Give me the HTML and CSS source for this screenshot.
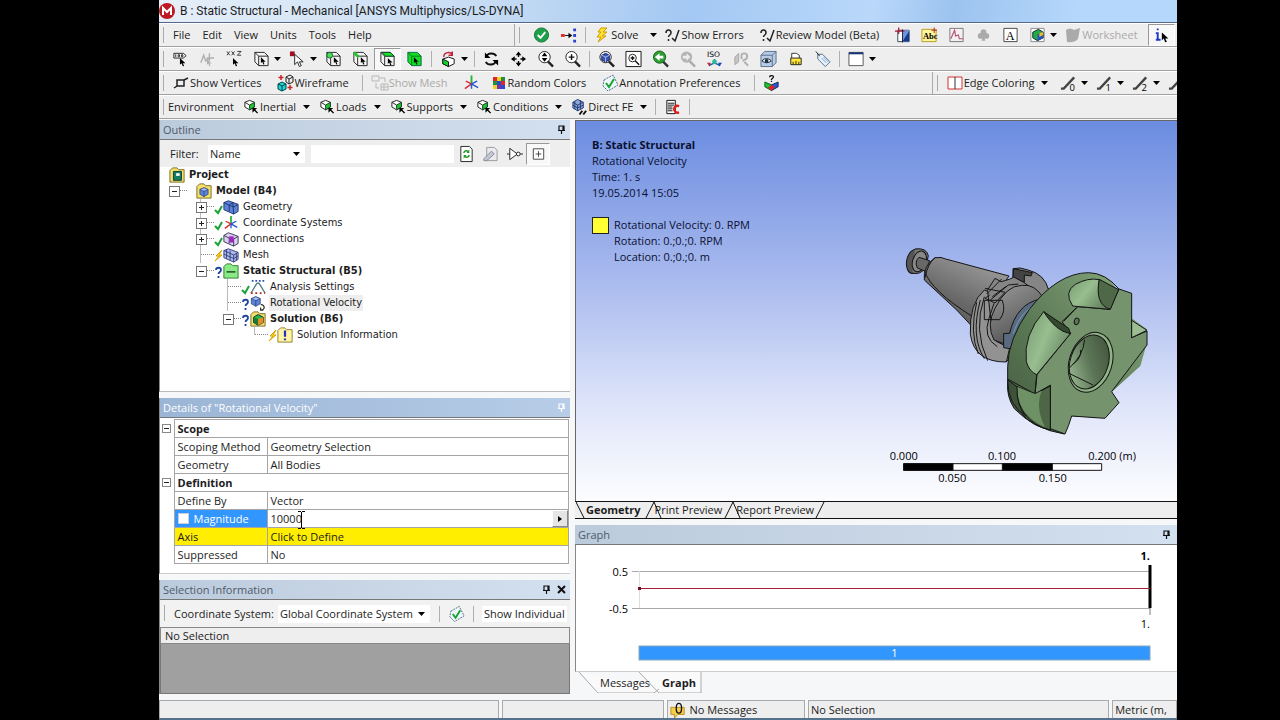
FILE: index.html
```html
<!DOCTYPE html>
<html lang="en">
<head>
<meta charset="utf-8">
<title>B : Static Structural - Mechanical</title>
<link rel="stylesheet" href="styles.css">
</head>
<body>
<svg class="defs" aria-hidden="true">
  <symbol id="arrow" viewBox="0 0 7 4"><path d="M0 0h7L3.500 4z" fill="#000"/></symbol>
  <symbol id="ptr" viewBox="0 0 7 10"><path d="M0 0v8l2-2 1.500 4 1.500-.700-1.500-3.300h3z"/></symbol>
  <symbol id="box" viewBox="0 0 18 18"><path d="M2 2h10l4 4v10H6L2 12z" fill="#f4f4f4" stroke="#222"/><path d="M2 2l4 4h10M6 6v10" fill="none" stroke="#222"/></symbol>
  <symbol id="selbox" viewBox="0 0 18 18"><use href="#box"/><use href="#ptr" x="8" y="7" width="6" height="8"/></symbol>
  <symbol id="vertexbox" viewBox="0 0 18 18"><use href="#box"/><circle cx="5" cy="5" r="3" fill="#4be04b" stroke="#164"/><use href="#ptr" x="9" y="7" width="6" height="8"/></symbol>
  <symbol id="edgebox" viewBox="0 0 18 18"><use href="#box"/><path d="M2 2l5 5" stroke="#26c42b" stroke-width="3"/><use href="#ptr" x="9" y="7" width="6" height="8"/></symbol>
  <symbol id="facebox" viewBox="0 0 18 18"><use href="#box"/><path d="M3 2h9l4 4H7z" fill="#18e22b" stroke="#142"/><use href="#ptr" x="9" y="8" width="6" height="8"/></symbol>
  <symbol id="bodybox" viewBox="0 0 18 18"><path d="M2 2h10l4 4v10H6L2 12z" fill="#12df25" stroke="#064"/><path d="M2 2l4 4h10M6 6v10" fill="none" stroke="#087818"/><use href="#ptr" x="8" y="7" width="6" height="8"/></symbol>
  <symbol id="label" viewBox="0 0 18 18"><path d="M2 3h10l3 2.500L12 8H2zM4 4v3M6.500 4.500h1.500v2H6.500zM10 4.500h1.500v2H10z" fill="#fff" stroke="#222"/><use href="#ptr" x="8" y="8" width="7" height="9"/></symbol>
  <symbol id="direction" viewBox="0 0 18 18"><path d="M2 13l3-8 2 6 4-3M11 3v8M8 8h8" stroke="#b0b0b0" fill="none" stroke-width="1.500"/><use href="#ptr" x="8" y="9" width="6" height="8" fill="#b0b0b0"/></symbol>
  <symbol id="coords" viewBox="0 0 18 18"><path d="M1 1l3 4M4 1L1 5M6 1l3 4M9 1L6 5M12 1h4l-4 4h4" stroke="#333" fill="none"/><use href="#ptr" x="7" y="8" width="7" height="9"/></symbol>
  <symbol id="singlesel" viewBox="0 0 18 18"><path d="M1 1h5v5H1z" fill="#a00e20"/><path d="M6 4v11l3-3 2 5 2-1-2-4h4z" fill="#fff" stroke="#222"/></symbol>
  <symbol id="rotbox" viewBox="0 0 18 18"><path d="M3 9l6-2 6 2v5l-6 3-6-3z" fill="#fff" stroke="#111"/><path d="M3 9l6 3v5l-6-3z" fill="#13d528" stroke="#111"/><path d="M4 7c0-6 8-6 9-2M13 1v4h-4" fill="none" stroke="#c0213b" stroke-width="1.500"/></symbol>
  <symbol id="rotate" viewBox="0 0 18 18"><path d="M3 7c2-5 9-5 11-1M14 11c-2 5-9 5-11 1" fill="none" stroke="#111" stroke-width="2"/><path d="M2 2v6h6zM16 16v-6h-6z"/></symbol>
  <symbol id="pan" viewBox="0 0 18 18"><path d="M9 3v12M3 9h12" stroke="#111" stroke-width="1.500" stroke-dasharray="4 4"/><path d="M9 1l3 4H6zM9 17l3-4H6zM1 9l4-3v6zM17 9l-4-3v6z"/></symbol>
  <symbol id="lens" viewBox="0 0 18 18"><path d="M11 11l6 6" stroke="#222" stroke-width="2.500"/><circle cx="8" cy="7" r="6" fill="#fff" stroke="#222"/></symbol>
  <symbol id="zoomud" viewBox="0 0 18 18"><use href="#lens"/><path d="M8 2l3 4H5zM8 12l3-4H5z"/></symbol>
  <symbol id="zoomin" viewBox="0 0 18 18"><use href="#lens"/><path d="M8 4v6M5 7h6" stroke="#111" stroke-width="1.500"/></symbol>
  <symbol id="zoomfit" viewBox="0 0 18 18"><use href="#lens"/><path d="M4 5l4-2 4 2v5l-4 2-4-2z" fill="#3854b5" stroke="#112267"/><path d="M4 5l4 2 4-2M8 7v5" stroke="#b4c2f0" fill="none"/></symbol>
  <symbol id="zoombox" viewBox="0 0 18 18"><path d="M1 1h16v16H1z" fill="#fff" stroke="#111"/><circle cx="8" cy="8" r="4" fill="none" stroke="#222"/><path d="M11 11l4 4M8 6v4M6 8h4" stroke="#111" stroke-width="1.500"/></symbol>
  <symbol id="zoomprev" viewBox="0 0 18 18"><path d="M11 11l6 6" stroke="#333" stroke-width="2.500"/><circle cx="8" cy="7" r="6.500" fill="#2e9b33" stroke="#17651c"/><path d="M3 7l5-4v2.500h4v3H8V11z" fill="#fff"/></symbol>
  <symbol id="zoomnext" viewBox="0 0 18 18"><path d="M11 11l6 6" stroke="#aaa" stroke-width="2.500"/><circle cx="8" cy="7" r="6" fill="#b4b4b4"/><path d="M12 7L8 3v2.500H4v3h4V11z" fill="#eee"/></symbol>
  <symbol id="lookat" viewBox="0 0 18 18"><path d="M2 7l4-4v9l-4 3z" fill="#c5c5c5" stroke="#a8a8a8"/><path d="M9 9V5q0-2 3-2t3 3-3 4l-2 1" fill="none" stroke="#b0b0b0" stroke-width="2"/><path d="M12 12l4 4" stroke="#aaa" stroke-width="2"/></symbol>
  <symbol id="eyebox" viewBox="0 0 18 18"><path d="M1 5l4-4h12v12l-4 4H1z" fill="#b7cbe4" stroke="#57708f"/><path d="M1 5h12v12M13 5l4-4" fill="none" stroke="#57708f"/><path d="M2 11q5-5 10 0-5 4-10 0z" fill="#fff" stroke="#223"/><circle cx="7" cy="11" r="2" fill="#134"/></symbol>
  <symbol id="ruler" viewBox="0 0 18 18"><path d="M5 8V3h5l3 2v3" fill="#fff" stroke="#333"/><path d="M4 8h11v7H4z" fill="#ffe838" stroke="#222"/><path d="M6.500 12v3M9.500 11v4M12.500 12v3" stroke="#222"/></symbol>
  <symbol id="tag" viewBox="0 0 18 18"><path d="M4 4h5l8 8-5 5-8-8z" fill="#e7f1fb" stroke="#546b86"/><path d="M8 8l5 5M10 7l5 5" stroke="#78a5d5"/><path d="M6 6L2 1" stroke="#222"/></symbol>
  <symbol id="window" viewBox="0 0 18 18"><path d="M1 2h15v14H1z" fill="#fff" stroke="#555"/><path d="M1 2h15v2H1z" fill="#143078"/></symbol>
  <symbol id="vertices" viewBox="0 0 18 18"><path d="M5 6h7v6H5z" fill="none" stroke="#222" stroke-width="1.500"/><path d="M12 6l4-2M5 12l-3 2" stroke="#222" stroke-width="1.500"/></symbol>
  <symbol id="wire" viewBox="0 0 18 18"><path d="M10 3l4-2 3 2v5l-4 2-3-2z" fill="#eee" stroke="#222"/><path d="M10 3l3 2 4-2M13 5v5" fill="none" stroke="#222"/><path d="M2 10l4-2 4 2v5l-4 2-4-2z" fill="#21d5d5" stroke="#044"/><path d="M2 10l4 2 4-2M6 12v5" fill="none" stroke="#044"/><path d="M5 1v5M2.500 3.500h5M14 11v5M11.500 13.500h5" stroke="#c32626" stroke-width="1.500"/></symbol>
  <symbol id="mesh" viewBox="0 0 18 18"><path d="M1 2h7v5H1zM10 10h7v6h-7zM13 10v6M10 13h7M9 4h5v4M5 9v5h3" fill="none" stroke="#b7b7b7"/></symbol>
  <symbol id="triad" viewBox="0 0 18 18"><path d="M9 10V1" stroke="#28b535" stroke-width="2"/><path d="M9 10l-7 5M9 10l-6-3" stroke="#d32c38" stroke-width="1.500"/><path d="M9 10l7 4M9 10l6-3M9 10v5" stroke="#2456c9" stroke-width="1.500"/></symbol>
  <symbol id="colors" viewBox="0 0 18 18"><path d="M3 3h4v4H3zM11 7h4v4h-4z" fill="#df2626"/><path d="M7 3h4v4H7zM3 11h4v4H3z" fill="#f1cf25"/><path d="M11 3h4v4h-4zM3 7h4v4H3z" fill="#1e8f3b"/><path d="M7 7h4v4H7zM11 11h4v4h-4z" fill="#2b49ce"/><path d="M7 11h4v4H7z" fill="#7a30b4"/></symbol>
  <symbol id="annot" viewBox="0 0 18 18"><path d="M3 6L12 1l5 10-10 6-5-5z" fill="#eef7fb" stroke="#486f83" stroke-dasharray="2 1"/><path d="M5 9l3 4 5-8" fill="none" stroke="#18a42d" stroke-width="2"/></symbol>
  <symbol id="rgbbox" viewBox="0 0 18 18"><path d="M2 8l7 3v6l-7-4z" fill="#18c52c" stroke="#152"/><path d="M16 8l-7 3v6l7-4z" fill="#2656da" stroke="#125"/><path d="M5 14l4-3 4 2-4 4z" fill="#da2525"/><path d="M7 3c0-3 5-2 4 0L9 5v1M9 7v1" fill="none" stroke="#111" stroke-width="1.300"/></symbol>
  <symbol id="load" viewBox="0 0 18 18"><path d="M2 4l5-2 5 2v5l-5 3-5-3z" fill="#fff" stroke="#222"/><path d="M7 7l5-3v5l-5 3z" fill="#20c531" stroke="#142"/><path d="M2 4l5 3" stroke="#222"/><path d="M10 10h5l-2 2 3 3-1 1-3-3-2 2z"/></symbol>
  <symbol id="cube" viewBox="0 0 18 18"><path d="M2 5l7-3 7 3v8l-7 4-7-4z" fill="#5d84d6" stroke="#1c3276"/><path d="M2 5l7 3 7-3-7-3z" fill="#a8c3f4" stroke="#1c3276"/><path d="M9 8v9" stroke="#1c3276"/></symbol>
  <symbol id="directfe" viewBox="0 0 18 18"><path d="M2 4l5-3 6 3v6l-6 3-5-3z" fill="#8fa6d8" stroke="#223a70"/><path d="M2 4l5 3 6-3M7 7v6M4 3v8M10 2v9M2 7l5 3 6-3" stroke="#223a70" fill="none"/><path d="M9 17l3-4M13 17l3-4" stroke="#111" stroke-width="2"/></symbol>
  <symbol id="doc" viewBox="0 0 18 18"><path d="M3 2h9v14H3z" fill="#fff" stroke="#111"/><path d="M4 5h7M4 7h7M4 9h5M4 11h5M4 13h5" stroke="#111"/><path d="M16 8c-7-2-7 8 0 7" fill="none" stroke="#e01c1c" stroke-width="2.500"/></symbol>
  <symbol id="ok" viewBox="0 0 18 18"><circle cx="9" cy="9" r="7.500" fill="#1fa04a" stroke="#187638"/><path d="M5 9l3 3 5-6" fill="none" stroke="#fff" stroke-width="2"/></symbol>
  <symbol id="connect" viewBox="0 0 18 18"><path d="M1 8h4v3H1z" fill="#e22727"/><path d="M5 9.500h6" stroke="#111"/><path d="M9 6.500l4 3-4 3z"/><path d="M14 2h3v3h-3zM14 8h3v3h-3zM14 14h3v3h-3z" fill="#2c43cf"/></symbol>
  <symbol id="bolt" viewBox="0 0 18 18"><path d="M8 2h6l-4 4h4l-5 4h4l-8 6 3-5H4l4-5H5z" fill="#ffe72c" stroke="#d09a00"/></symbol>
  <symbol id="query" viewBox="0 0 18 18"><path d="M3 7c0-4 5-4 5 0 0 2-2.500 2-2.500 4M5.500 13v2M9 12l3 3 4-11" fill="none" stroke="#222" stroke-width="1.500"/></symbol>
  <symbol id="section" viewBox="0 0 18 18"><path d="M4 4h12v12H4z" fill="#fff" stroke="#345"/><path d="M9 4h7v12H9z" fill="#6f93dd"/><path d="M9 16l7-11v11z" fill="#173a91"/><path d="M1 5h10M5 1v7" stroke="#a51836" stroke-width="1.300"/><path d="M9 3v14" stroke="#223"/></symbol>
  <symbol id="chart" viewBox="0 0 18 18"><path d="M2 2h14v14H2z" fill="#f5eff3" stroke="#777"/><path d="M3 13l4-9 1 6 3-1 1 4 4 0" fill="none" stroke="#b5536e" stroke-width="1.200"/></symbol>
  <symbol id="club" viewBox="0 0 18 18"><circle cx="9" cy="6" r="3" fill="#aaa"/><circle cx="6" cy="10" r="3" fill="#aaa"/><circle cx="12" cy="10" r="3" fill="#aaa"/><path d="M9 8l2 7H7z" fill="#aaa"/></symbol>
  <symbol id="image" viewBox="0 0 18 18"><path d="M2 2h14v14H2z" fill="#fff" stroke="#888"/><path d="M4 6l6-3 5 3v6l-6 3-5-3z" fill="#22ad40" stroke="#123"/><path d="M9 8l6-2v6l-6 3z" fill="#264fc4"/><path d="M11 7l4-1v3l-4 2z" fill="#eebe22"/></symbol>
  <symbol id="sheet" viewBox="0 0 18 18"><path d="M2 4q4-3 8 0l6-2-2 11q-4 4-11 3z" fill="#aaa"/></symbol>
  <symbol id="edgecol" viewBox="0 0 18 18"><path d="M2 3h14v12H2z" fill="#fff" stroke="#d43333"/><path d="M9 3v12" stroke="#333"/></symbol>
  <symbol id="pin" viewBox="0 0 9 9"><path d="M2 5V1h5v4M1 5.500h7M4.500 6v3M6 1v4" fill="none" stroke="currentColor" stroke-width="1.200"/></symbol>
  <symbol id="tick" viewBox="0 0 9 16"><path d="M1 11l3 3 4-7" fill="none" stroke="#1ba336" stroke-width="2"/></symbol>
  <symbol id="ask" viewBox="0 0 9 16"><path d="M2 7c0-3 5-3 5 0 0 2-2.500 2-2.500 4M4.500 13v2" fill="none" stroke="#1d46a1" stroke-width="1.800"/></symbol>
  <symbol id="zap" viewBox="0 0 9 16"><path d="M8 3L2 9h3l-4 5 7-6H5z" fill="#ffe12f" stroke="#d6a300"/></symbol>
  <symbol id="folder" viewBox="0 0 18 18"><path d="M1 4l3-3h5l2 2h6v14H1z" fill="#f3df6c" stroke="#77651c"/></symbol>
  <symbol id="project" viewBox="0 0 18 18"><use href="#folder"/><path d="M5 5h9v10H5z" fill="#147b64" stroke="#053c30"/><path d="M8 7h4v3H8z" fill="#fff"/></symbol>
  <symbol id="model" viewBox="0 0 18 18"><use href="#folder"/><use href="#cube" x="3" y="4" width="12" height="12"/></symbol>
  <symbol id="geom" viewBox="0 0 18 18"><path d="M1 4l5-2 11 4v8l-5 3L1 12z" fill="#5e82d5" stroke="#19316f"/><path d="M1 4l6 3v7M7 7l4-3 1 13M7 7l5 2 5-3" fill="none" stroke="#19316f"/></symbol>
  <symbol id="conn" viewBox="0 0 18 18"><path d="M1 5l5-3 11 4v8l-5 3-11-5z" fill="#d9d2ea" stroke="#342b53"/><path d="M1 5l6 3v6M12 9v8M7 8l5 1 5-3" fill="none" stroke="#342b53"/><path d="M7 6h5v7H7z" fill="#9d28c2"/></symbol>
  <symbol id="meshcube" viewBox="0 0 18 18"><path d="M1 4l5-2 11 4v8l-5 3L1 12z" fill="#aebbe8" stroke="#2f397e"/><path d="M1 8l11 5 5-3M4 3v10M8 4v11M12 9v8M1 4l11 5 5-3M15 7v8" fill="none" stroke="#2f397e"/></symbol>
  <symbol id="static" viewBox="0 0 18 18"><path d="M1 4l3-3h5l2 2h6v14H1z" fill="#8be987" stroke="#267927"/><path d="M4 10h10" stroke="#123f14" stroke-width="1.500"/></symbol>
  <symbol id="settings" viewBox="0 0 18 18"><path d="M2 2h15" stroke="#2c4fb4" stroke-width="2" stroke-dasharray="2 2"/><path d="M1 16L7 6q2-3 4 0l6 10" fill="none" stroke="#4a7c84" stroke-width="1.500"/><path d="M1 16h16" stroke="#ae2424" stroke-width="2" stroke-dasharray="2 3"/></symbol>
  <symbol id="rotvel" viewBox="0 0 18 18"><use href="#cube" x="0" y="0" width="13" height="14"/><path d="M12 11c4-1 6 5 1 6M12 14v3h3" fill="none" stroke="#222" stroke-width="1.300"/></symbol>
  <symbol id="solution" viewBox="0 0 18 18"><use href="#folder"/><path d="M4 7l5-3 6 3v6l-6 3-5-3z" fill="#22b948" stroke="#123"/><path d="M9 9l6-2v6l-6 3z" fill="#e98d22"/><path d="M9 9l-5-2v6l5 3z" fill="#187a35"/></symbol>
  <symbol id="info" viewBox="0 0 18 18"><path d="M1 4l3-3h5l2 2h6v14H1z" fill="#fff5a3" stroke="#8a7621"/><path d="M9 4v7M9 13v2" stroke="#2432bd" stroke-width="2.500"/></symbol>
</svg>

<main class="window">
  <header class="titlebar">
    <svg class="logo" viewBox="0 0 16 16"><circle cx="8" cy="8" r="8" fill="#bd1823"/><path d="M4 12V5l4 4 4-4v7" fill="none" stroke="#fff" stroke-width="2"/></svg>
    <h1>B : Static Structural - Mechanical [ANSYS Multiphysics/LS-DYNA]</h1>
  </header>

  <div class="bar">
    <nav class="toolbar menu">
      <button>File</button><button>Edit</button><button>View</button><button>Units</button><button>Tools</button><button>Help</button>
    </nav>
    <div class="toolbar standard">
      <button class="tool" aria-label="Status"><svg><use href="#ok"/></svg></button>
      <button class="tool" aria-label="Connections"><svg><use href="#connect"/></svg></button>
      <i class="sep"></i>
      <button class="text solve"><svg><use href="#bolt"/></svg>Solve<svg class="caret wide"><use href="#arrow"/></svg></button>
      <button class="text"><svg><use href="#query"/></svg>Show Errors</button>
      <button class="text"><svg><use href="#query"/></svg>Review Model (Beta)</button>
      <button class="tool" aria-label="Section plane"><svg><use href="#section"/></svg></button>
      <button class="tool" aria-label="Annotation"><svg viewBox="0 0 18 18"><path d="M1 3h15v13H1z" fill="#fff59a" stroke="#bb9a20"/><text x="2" y="13" class="abc">Abc</text><path d="M14 1v6M11 4h6" stroke="#a33"/></svg></button>
      <button class="tool" aria-label="Chart"><svg><use href="#chart"/></svg></button>
      <button class="tool" aria-label="Comment" disabled><svg><use href="#club"/></svg></button>
      <button class="tool" aria-label="Text"><svg viewBox="0 0 18 18"><path d="M2 2h14v14H2z" fill="#fff" stroke="#444"/><text x="4" y="14" class="serif">A</text></svg></button>
      <button class="tool drop" aria-label="Image"><svg><use href="#image"/></svg><svg class="caret"><use href="#arrow"/></svg></button>
      <button class="text" disabled><svg><use href="#sheet"/></svg>Worksheet</button>
      <button class="tool pressed" aria-label="Selection information"><svg viewBox="0 0 18 18"><path d="M5 2v2M3 7h2v7M3 14h5" stroke="#1936ce" stroke-width="2" fill="none"/><use href="#ptr" x="9" y="6" width="8" height="11"/></svg></button>
    </div>
  </div>

  <div class="bar">
    <div class="toolbar">
      <button class="tool" aria-label="Label"><svg><use href="#label"/></svg></button>
      <button class="tool" aria-label="Direction" disabled><svg><use href="#direction"/></svg></button>
      <button class="tool" aria-label="Coordinates"><svg><use href="#coords"/></svg></button>
      <button class="tool drop" aria-label="Select type"><svg><use href="#selbox"/></svg><svg class="caret"><use href="#arrow"/></svg></button>
      <button class="tool drop" aria-label="Select mode"><svg><use href="#singlesel"/></svg><svg class="caret"><use href="#arrow"/></svg></button>
      <button class="tool" aria-label="Vertex"><svg><use href="#vertexbox"/></svg></button>
      <button class="tool" aria-label="Edge"><svg><use href="#edgebox"/></svg></button>
      <button class="tool pressed" aria-label="Face"><svg><use href="#facebox"/></svg></button>
      <button class="tool" aria-label="Body"><svg><use href="#bodybox"/></svg></button>
      <i class="sep"></i>
      <button class="tool drop" aria-label="Extend"><svg><use href="#rotbox"/></svg><svg class="caret"><use href="#arrow"/></svg></button>
      <i class="sep"></i>
      <button class="tool" aria-label="Rotate"><svg><use href="#rotate"/></svg></button>
      <button class="tool" aria-label="Pan"><svg><use href="#pan"/></svg></button>
      <button class="tool" aria-label="Zoom"><svg><use href="#zoomud"/></svg></button>
      <button class="tool" aria-label="Zoom in"><svg><use href="#zoomin"/></svg></button>
      <i class="sep"></i>
      <button class="tool" aria-label="Zoom to fit"><svg><use href="#zoomfit"/></svg></button>
      <button class="tool" aria-label="Magnifier"><svg><use href="#zoombox"/></svg></button>
      <button class="tool" aria-label="Previous view"><svg><use href="#zoomprev"/></svg></button>
      <button class="tool" aria-label="Next view" disabled><svg><use href="#zoomnext"/></svg></button>
      <button class="tool" aria-label="Isometric"><svg viewBox="0 0 18 18"><text x="1" y="7" class="iso">ISO</text><path d="M9 13V9M9 13l-6 3M9 13l6 3" stroke="#169" stroke-width="1.500"/><path d="M1 13l4 0-1 4z" fill="#c02030"/><path d="M17 13l-4 0 1 4z" fill="#203fc0"/><circle cx="9" cy="12" r="2.500" fill="#2cb9a0"/></svg></button>
      <button class="tool" aria-label="Look at" disabled><svg><use href="#lookat"/></svg></button>
      <button class="tool" aria-label="Manage views"><svg><use href="#eyebox"/></svg></button>
      <button class="tool" aria-label="Ruler"><svg><use href="#ruler"/></svg></button>
      <button class="tool" aria-label="Tag"><svg><use href="#tag"/></svg></button>
      <i class="sep"></i>
      <button class="tool drop" aria-label="Viewports"><svg><use href="#window"/></svg><svg class="caret"><use href="#arrow"/></svg></button>
    </div>
  </div>

  <div class="bar">
    <div class="toolbar graphics">
      <button class="text"><svg><use href="#vertices"/></svg>Show Vertices</button>
      <button class="text"><svg><use href="#wire"/></svg>Wireframe</button>
      <i class="sep"></i>
      <button class="text" disabled><svg><use href="#mesh"/></svg>Show Mesh</button>
      <button class="tool" aria-label="Triad"><svg><use href="#triad"/></svg></button>
      <button class="text"><svg><use href="#colors"/></svg>Random Colors</button>
      <button class="text"><svg><use href="#annot"/></svg>Annotation Preferences</button>
      <i class="sep"></i>
      <button class="tool" aria-label="Body query"><svg><use href="#rgbbox"/></svg></button>
    </div>
    <div class="toolbar edges">
      <button class="text"><svg><use href="#edgecol"/></svg>Edge Coloring<svg class="caret"><use href="#arrow"/></svg></button>
      <button class="tool drop" aria-label="Edges 0"><svg viewBox="0 0 18 18"><path d="M1 15h3L15 3" fill="none" stroke="#444" stroke-width="2.500"/><text x="10" y="17" class="digit">0</text></svg><svg class="caret"><use href="#arrow"/></svg></button>
      <button class="tool drop" aria-label="Edges 1"><svg viewBox="0 0 18 18"><path d="M1 15h3L15 3" fill="none" stroke="#444" stroke-width="2.500"/><text x="10" y="17" class="digit">1</text></svg><svg class="caret"><use href="#arrow"/></svg></button>
      <button class="tool drop" aria-label="Edges 2"><svg viewBox="0 0 18 18"><path d="M1 15h3L15 3" fill="none" stroke="#444" stroke-width="2.500"/><text x="10" y="17" class="digit">2</text></svg><svg class="caret"><use href="#arrow"/></svg></button>
      <button class="tool drop" aria-label="Edges 3"><svg viewBox="0 0 18 18"><path d="M1 15h3L15 3" fill="none" stroke="#444" stroke-width="2.500"/></svg></button>
    </div>
  </div>

  <div class="bar">
    <div class="toolbar env">
      <span class="barname">Environment</span>
      <button class="text"><svg><use href="#load"/></svg>Inertial<svg class="caret"><use href="#arrow"/></svg></button>
      <button class="text"><svg><use href="#load"/></svg>Loads<svg class="caret"><use href="#arrow"/></svg></button>
      <button class="text"><svg><use href="#load"/></svg>Supports<svg class="caret"><use href="#arrow"/></svg></button>
      <button class="text"><svg><use href="#load"/></svg>Conditions<svg class="caret"><use href="#arrow"/></svg></button>
      <button class="text"><svg><use href="#directfe"/></svg>Direct FE<svg class="caret"><use href="#arrow"/></svg></button>
      <i class="sep"></i>
      <button class="tool" aria-label="Commands"><svg><use href="#doc"/></svg></button>
      <i class="sep"></i>
    </div>
  </div>

  <div class="work">
    <div class="left">
      <section class="panel outline">
        <header class="phead"><h2>Outline</h2><svg class="pin"><use href="#pin"/></svg></header>
        <div class="filter">
          <label for="filter">Filter:</label>
          <span class="combo"><select id="filter"><option>Name</option></select><svg class="caret"><use href="#arrow"/></svg></span>
          <input type="text" aria-label="Filter text">
          <button class="tool" aria-label="Refresh"><svg viewBox="0 0 18 18"><path d="M3 1h9l3 3v13H3z" fill="#fff" stroke="#222"/><path d="M6 8c1-3 4-3 5-1M12 10c-1 3-4 3-5 1" fill="none" stroke="#24952c" stroke-width="1.500"/><path d="M12 4v4H9zM6 14v-4h3z" fill="#24952c"/></svg></button>
          <button class="tool" aria-label="Clear"><svg viewBox="0 0 18 18"><path d="M5 2h8l3 3v11H5z" fill="#e9e9ef" stroke="#999"/><path d="M2 14l8-8 3 3-8 7H2z" fill="#c3c7dc" stroke="#888"/></svg></button>
          <button class="tool" aria-label="Invert"><svg viewBox="0 0 18 18"><path d="M4 3v12l8-6zM1 9h3M15 9h3" fill="#fff" stroke="#222"/><circle cx="13" cy="9" r="2" fill="#fff" stroke="#222"/></svg></button>
          <button class="tool pressed" aria-label="Expand all"><svg viewBox="0 0 18 18"><path d="M3.500 3.500h11v11h-11zM9 6v6M6 9h6" fill="#fff" stroke="#444"/></svg></button>
        </div>
        <ul class="tree">
          <li><i class="mark"></i><svg class="ico"><use href="#project"/></svg><b>Project</b></li>
          <li><i class="cell exp"></i><i class="mark"></i><svg class="ico"><use href="#model"/></svg><b>Model (B4)</b></li>
          <li><i class="cell"></i><i class="cell line exp plus"></i><svg class="mark"><use href="#tick"/></svg><svg class="ico"><use href="#geom"/></svg><span>Geometry</span></li>
          <li><i class="cell"></i><i class="cell line exp plus"></i><svg class="mark"><use href="#tick"/></svg><svg class="ico"><use href="#triad"/></svg><span>Coordinate Systems</span></li>
          <li><i class="cell"></i><i class="cell line exp plus"></i><svg class="mark"><use href="#tick"/></svg><svg class="ico"><use href="#conn"/></svg><span>Connections</span></li>
          <li><i class="cell"></i><i class="cell line tee"></i><svg class="mark"><use href="#zap"/></svg><svg class="ico"><use href="#meshcube"/></svg><span>Mesh</span></li>
          <li><i class="cell"></i><i class="cell exp"></i><svg class="mark"><use href="#ask"/></svg><svg class="ico"><use href="#static"/></svg><b>Static Structural (B5)</b></li>
          <li><i class="cell"></i><i class="cell"></i><i class="cell line tee"></i><svg class="mark"><use href="#tick"/></svg><svg class="ico"><use href="#settings"/></svg><span>Analysis Settings</span></li>
          <li><i class="cell"></i><i class="cell"></i><i class="cell line tee"></i><svg class="mark"><use href="#ask"/></svg><svg class="ico"><use href="#rotvel"/></svg><span class="sel">Rotational Velocity</span></li>
          <li><i class="cell"></i><i class="cell"></i><i class="cell exp"></i><svg class="mark"><use href="#ask"/></svg><svg class="ico"><use href="#solution"/></svg><b>Solution (B6)</b></li>
          <li><i class="cell"></i><i class="cell"></i><i class="cell"></i><i class="cell half tee"></i><svg class="mark"><use href="#zap"/></svg><svg class="ico"><use href="#info"/></svg><span>Solution Information</span></li>
        </ul>
      </section>

      <section class="panel details">
        <header class="phead active"><h2>Details of "Rotational Velocity"</h2><svg class="pin"><use href="#pin"/></svg></header>
        <table>
          <colgroup><col class="c-fold"><col class="c-key"><col></colgroup>
          <tbody>
          <tr><td class="fold"><i class="fbox"></i></td><th colspan="2">Scope</th></tr>
          <tr><td class="fold"></td><td>Scoping Method</td><td>Geometry Selection</td></tr>
          <tr><td class="fold"></td><td>Geometry</td><td>All Bodies</td></tr>
          <tr><td class="fold"><i class="fbox"></i></td><th colspan="2">Definition</th></tr>
          <tr><td class="fold"></td><td>Define By</td><td>Vector</td></tr>
          <tr><td class="fold"></td><td class="on"><label class="param"><input type="checkbox">Magnitude</label></td><td><div class="edit"><input type="text" value="10000" aria-label="Magnitude value"><button aria-label="More"><svg viewBox="0 0 4 6"><path d="M0 0v6l4-3z"/></svg></button><svg class="ibeam" viewBox="0 0 9 18"><path d="M1 .500h3M5 .500h3M4.500 1v16M1 17.500h3M5 17.500h3" fill="none" stroke="#000"/></svg></div></td></tr>
          <tr class="warn"><td class="fold"></td><td>Axis</td><td>Click to Define</td></tr>
          <tr><td class="fold"></td><td>Suppressed</td><td>No</td></tr>
          </tbody>
        </table>
      </section>

      <section class="panel selection">
        <header class="phead"><h2>Selection Information</h2><svg class="pin"><use href="#pin"/></svg><svg class="pin" viewBox="0 0 9 9"><path d="M1 1l7 7M8 1L1 8" stroke="#111" stroke-width="2"/></svg></header>
        <div class="selbar">
          <label for="cs">Coordinate System:</label>
          <span class="combo"><select id="cs"><option>Global Coordinate System</option></select><svg class="caret"><use href="#arrow"/></svg></span>
          <i class="sep"></i>
          <button class="tool" aria-label="Preferences"><svg><use href="#annot"/></svg></button>
          <i class="sep"></i>
          <span class="show">Show Individual</span>
        </div>
        <div class="nosel">No Selection</div>
        <div class="gray"></div>
      </section>
    </div>

    <div class="right">
      <section class="scene">
        <div class="legend">
          <h2>B: Static Structural</h2>
          <p>Rotational Velocity</p><p>Time: 1. s</p><p>19.05.2014 15:05</p>
          <div class="entry"><i class="swatch"></i><div><p>Rotational Velocity: 0. RPM</p><p>Rotation: 0.;0.;0. RPM</p><p>Location: 0.;0.;0. m</p></div></div>
        </div>
        <svg class="model" viewBox="0 0 870 780">
          <defs>
            <linearGradient id="cone" x1="0" y1="1" x2=".6" y2="0"><stop offset="0" stop-color="#555"/><stop offset=".45" stop-color="#686868"/><stop offset="1" stop-color="#999"/></linearGradient>
            <linearGradient id="neck" x1="0" y1="0" x2=".5" y2="1"><stop offset="0" stop-color="#9b9b9b"/><stop offset="1" stop-color="#4e4e4e"/></linearGradient>
            <linearGradient id="rim" x1="0" y1="1" x2="1" y2="0"><stop offset="0" stop-color="#42593d"/><stop offset=".45" stop-color="#5d7b57"/><stop offset="1" stop-color="#89ab80"/></linearGradient>
            <linearGradient id="pocket" x1="0" y1="0" x2="1" y2=".6"><stop offset="0" stop-color="#769a6e"/><stop offset=".5" stop-color="#98be90"/><stop offset="1" stop-color="#668560"/></linearGradient>
            <linearGradient id="bore" x1="1" y1="0" x2="0" y2="1"><stop offset="0" stop-color="#3c4d37"/><stop offset=".5" stop-color="#5d7657"/><stop offset="1" stop-color="#a7c99e"/></linearGradient>
          </defs>
          <g stroke="#151515" stroke-width="3" stroke-linejoin="round">
            <ellipse cx="88" cy="94" rx="23" ry="37" transform="rotate(12 88 94)" fill="#555"/>
            <path d="M90 57q34-5 40 20l-8 37q-18 22-40 15" fill="#777"/>
            <ellipse cx="103" cy="94" rx="20" ry="32" transform="rotate(18 103 94)" fill="#888"/>
            <path d="M102 82l32 10-12 32-25-10q-9-20 5-32z" fill="#686868"/>
            <path d="M118 150q-5-40 32-67 20-3 32 4L372 138l-70 100-42 50-45-48z" fill="url(#cone)"/>
            <path d="M118 122q20 60 145 138M150 83q-22 18-30 60" fill="none"/>
            <path d="M384 145l0-29q20-6 45 4 50 12 62 60l-30 80-60-90z" fill="#858585"/>
            <path d="M386 116l56 12-4 10-20-3 0 22-34-14z" fill="#444"/>
            <path d="M298 195l32-50 18 10q32-8 38-14l30 16 40 30-60 90-20 110-16 8z" fill="#858585"/>
            <path d="M298 180q-46 40-42 133 12 84 108 83l10-42-40-20-16-60-10-90z" fill="#929292"/>
            <path d="M286 210q-30 110 12 176M298 200q-34 100 10 192M275 217q-22 90 5 155" fill="none"/>
            <path d="M330 235q34-69 80-69 40-5 65 38l-86 150-62-24q-24-45 3-95z" fill="url(#neck)"/>
            <path d="M327 220l-15 45q-20 58 25 85M298 211h54q12 32-8 58h-46zM300 175l60 12-30 32-30-14 14-10" fill="none"/>
            <path d="M316 210l54-45 30-3M305 192l45-45M322 200l40-30" fill="none"/>
            <path d="M374 310q20-88 92-103l8 20-92 130-26-4v-42z" fill="#596b80"/>
            <path d="M385 310q20-69 80-92" fill="none" stroke="#79a"/>
            <path d="M368 455V410q0-80 65-172 85-109 177-110 60 0 83 48l47 14v75l46 33v40l-20 70-86 78 21 30-42 48-105-5-16 53q-90-14-150-76-24-36-20-81z" fill="url(#rim)" stroke="none"/>
            <path d="M368 455V410q0-80 65-172 85-109 177-110 50 0 93 50M368 455q-4 45 20 81 60 62 150 76" fill="none"/>
            <path d="M578 230l97 8 27-61 38 13v133l46-20v42l-106 140 22 33-42 47-100-7q-8 28-20 54l-44-16V466l-46 26 6-58 101-124-26-35z" fill="#75936d"/>
            <path d="M740 271l46 30-46 22z" fill="#9abd91"/>
            <path d="M563 228q-28-42 8-65 38-21 72-14-12 50 31 89z" fill="url(#pocket)"/>
            <path d="M643 148l58 31-25 59q-48-15-33-90z" fill="#4e6848"/>
            <path d="M424 395q-10-79 52-150l80 66-101 123q-22-9-31-39z" fill="url(#pocket)"/>
            <path d="M476 245l75 50 5 16-22-7q-33-18-58-59z" fill="#34482f"/>
            <path d="M578 230l-42 44M368 447l82 45 5-58M450 492l46-26v134q-112-25-101-128z" fill="none"/>
            <path d="M396 470l54 22 46-24v132q-102-28-100-130z" fill="#4c6646"/>
            <path d="M396 470l54 22 20-10q-20 50 10 110-85-40-84-122z" fill="#6e9165" stroke="none"/>
            <path d="M368 450l28 20q-2 60 28 88-56-30-56-108z" fill="#3d5238"/>
            <ellipse cx="617" cy="397" rx="64" ry="92" transform="rotate(18 617 397)" fill="#8fb585"/>
            <ellipse cx="613" cy="396" rx="57" ry="83" transform="rotate(18 613 396)" fill="url(#bore)"/>
            <path d="M599 329q-4 48-46 85M587 360q3 25-24 43M552 430l72 35" fill="none"/>
            <ellipse cx="575" cy="274" rx="7" ry="10" transform="rotate(15 575 274)" fill="#5d7657"/>
            <path d="M56 701h594v20H56z" fill="#fff"/>
            <path d="M56 701h148v20H56zM352 701h150v20H352z" fill="#000"/>
          </g>
          <g class="scale"><text x="14" y="690">0.000</text><text x="309" y="690">0.100</text><text x="610" y="690">0.200 (m)</text><text x="160" y="755">0.050</text><text x="461" y="755">0.150</text></g>
        </svg>
      </section>
      <nav class="viewtabs">
        <button class="current">Geometry</button><button>Print Preview</button><button>Report Preview</button>
        <svg class="slants" viewBox="0 0 260 17"><path d="M0 0l8 16M70 16L78 0l7 16M149 16l8-16 7 16M240 16l8-16" fill="none" stroke="#111"/></svg>
      </nav>
      <section class="graph">
        <header class="phead"><h2>Graph</h2><svg class="pin"><use href="#pin"/></svg></header>
        <div class="plotbox">
          <svg class="plot">
            <path d="M-7 24.500H0M-7 61.500H0" stroke="#aaa"/>
            <line x1="0" y1="24.500" x2="100%" y2="24.500" stroke="#aaa"/><line x1="0" y1="61.500" x2="100%" y2="61.500" stroke="#aaa"/>
            <line x1=".5" y1="24" x2=".5" y2="61" stroke="#ddd"/>
            <line x1="100%" y1="18" x2="100%" y2="61" stroke="#000" stroke-width="3"/>
            <line x1="100%" y1="61" x2="100%" y2="68" stroke="#777"/>
            <line x1="0" y1="41.500" x2="100%" y2="41.500" stroke="#a32035"/>
            <rect x="-1" y="40" width="3" height="3" fill="#701020"/>
            <text x="-11" y="29" text-anchor="end">0.5</text><text x="-11" y="66" text-anchor="end">-0.5</text>
            <text x="100%" y="13" text-anchor="end" font-weight="bold">1.</text><text x="100%" y="81" text-anchor="end">1.</text>
            <rect x="0" y="99" width="100%" height="14" fill="#3296ff" stroke="#8ab"/>
            <text x="50%" y="110" text-anchor="middle" fill="#fff">1</text>
          </svg>
        </div>
        <nav class="bottomtabs">
          <svg viewBox="0 0 130 21"><path d="M4 0l19 21h56l5-4M64 0l20 21h42V0" fill="#fafafa" stroke="#aaa"/></svg>
          <button>Messages</button><button class="current">Graph</button>
        </nav>
      </section>
    </div>
  </div>

  <footer class="status">
    <span class="s1"></span><span class="s2"></span>
    <span class="s3"><svg viewBox="0 0 18 18"><path d="M1 6h15v8H9l-4 4v-4H1z" fill="#f5cd4b" stroke="#b88c20"/><ellipse cx="10" cy="7" rx="3" ry="5.500" fill="none" stroke="#111" stroke-width="1.500"/></svg>No Messages</span>
    <span class="s4">No Selection</span><span class="s5">Metric (m, </span>
  </footer>
  <div class="edge"></div>
</main>
</body>
</html>
```

FILE: styles.css
```css
* { box-sizing: border-box; }
body {
  margin: 0;
  padding: 0 103px 0 159px;
  background: #000;
  color: #1c1c1c;
  font: 11px/16px "Open Sans", "Noto Sans", sans-serif;
}
h1, h2, p, ul { margin: 0; padding: 0; font: inherit; }
button, input, select { font: inherit; color: inherit; }
button { margin: 0; padding: 0; border: 0; background: none; white-space: nowrap; }
button:disabled { color: #aaa; }
.defs { position: absolute; width: 0; height: 0; }

.window {
  display: flex;
  flex-direction: column;
  height: 100vh;
  min-height: 720px;
  overflow: hidden;
  background: #f6f7f9;
}
.titlebar {
  display: flex;
  align-items: center;
  gap: 5px;
  height: 23px;
  border-bottom: 1px solid #56688a;
  background: linear-gradient(100deg, #e6eff9 0%, #c5dbf3 33%, #a3c8f3 52%, #b9d8fa 70%, #9cc3ef 78%, #b5d7fb 90%);
  flex: none;
}
.titlebar h1 { font: 12px/16px Roboto, "Open Sans", sans-serif; }
.logo { width: 16px; height: 16px; }

.bar {
  display: flex;
  height: 24px;
  background: #eee;
  border-bottom: 1px solid #a2a2a2;
  border-top: 1px solid #fff;
  flex: none;
}
.toolbar {
  display: flex;
  align-items: center;
  flex: 1 1 0;
  min-width: 0;
  padding-left: 8px;
  overflow: hidden;
  background: linear-gradient(#aaa, #aaa) 4px 3px / 1px 16px no-repeat;
}
.toolbar > * { flex: none; }
.menu { flex: 0 0 35%; border-right: 1px solid #aaa; }
.menu button { padding: 0 6px; }
.graphics { flex: 0 0 76%; border-right: 1px solid #aaa; }
.standard { padding-left: 13px; }
.edges { padding-left: 9px; }
.tool {
  display: flex;
  align-items: center;
  justify-content: center;
  width: 27px;
  height: 22px;
}
.tool svg, .text svg { width: 18px; height: 18px; flex: none; }
.env .text svg:first-child, .tool svg { width: 17px; }
.drop { width: 36px; justify-content: flex-start; gap: 4px; padding-left: 5px; }
.tool .caret, .text .caret, .caret { width: 7px; height: 4px; }
.text { display: flex; align-items: center; height: 22px; padding: 0 10px 0 5px; }
.solve { padding-right: 1px; }
.standard .text { padding-left: 4px; }
.env .text { padding: 0 5px 0 4px; }
.edges .text { padding: 0 7px 0 4px; }
.text .caret { margin-left: 7px; }
.text .wide { margin-left: 12px; }
.standard .solve { padding-right: 2px; }
.pressed { border: 1px solid #999; border-right-color: #fff; border-bottom-color: #fff; background: #f8f8f8; }
.sep { width: 1px; height: 16px; margin: 0 3px; background: #b0b0b0; flex: none; }
.barname { padding: 0 5px 0 1px; }
.abc { font: bold 9px "Liberation Serif", serif; }
.serif { font: 13px "Liberation Serif", serif; }
.iso { font: 8px "DejaVu Sans", sans-serif; }
.digit { font: 10px "Open Sans", sans-serif; }

.work { display: flex; flex: 1; min-height: 0; gap: 5px; padding-top: 1px; }
.left { display: flex; flex-direction: column; gap: 6px; flex: 0 0 411px; padding-bottom: 4px; }
.right { display: flex; flex-direction: column; flex: 1; min-width: 0; padding-bottom: 2px; }
.panel { border-left: 1px solid #888; display: flex; flex-direction: column; }
.phead {
  display: flex;
  align-items: center;
  gap: 6px;
  height: 20px;
  padding: 0 4px 0 3px;
  color: #4e5a6a;
  background: linear-gradient(90deg, #bccbdc, #d3e0ef);
  border-bottom: 1px solid #777;
  flex: none;
}
.phead h2 { flex: 1; }
.phead.active { color: #fff; background: linear-gradient(90deg, #9bb5d6, #b7cde7); }
.pin { width: 9px; height: 9px; color: #111; }
.active .pin { color: #fff; }

.outline { flex: 1; background: #fff; border-bottom: 1px solid #bbb; }
.filter {
  display: flex;
  align-items: center;
  height: 27px;
  padding: 0 20px 0 10px;
  background: #eee;
  flex: none;
}
.filter label { flex: 0 0 38px; }
.filter .combo { flex: 0 0 97px; margin-right: 6px; }
.filter input { flex: 1; min-width: 0; height: 18px; border: 0; background: #fff; }
.filter .tool { width: 24px; flex: none; }
.combo { position: relative; display: block; }
.combo select { display: block; width: 100%; height: 18px; border: 0; padding: 0 16px 0 2px; background: #fff; appearance: none; }
.combo .caret { position: absolute; right: 5px; top: 7px; }

.tree { list-style: none; font: 11px/16px "DejaVu Sans Condensed", "DejaVu Sans", sans-serif; }
.tree li { display: flex; height: 16px; }
.cell { position: relative; width: 27px; height: 16px; flex: none; }
.line { background: linear-gradient(#bbb, #bbb) 13px 0 / 1px 16px no-repeat; }
.half { background: linear-gradient(#bbb, #bbb) 13px 0 / 1px 8px no-repeat; }
.tee::before, .exp::before { content: ""; position: absolute; left: 14px; right: 0; top: 7px; border-top: 1px dotted #888; }
.exp::after {
  content: "";
  position: absolute;
  left: 9px;
  top: 3px;
  width: 9px;
  height: 9px;
  border: 1px solid #777;
  background: linear-gradient(#222, #222) center / 5px 1px no-repeat, #fff;
}
.plus::after { background: linear-gradient(#222, #222) center / 5px 1px no-repeat, linear-gradient(#222, #222) center / 1px 5px no-repeat, #fff; }
.mark { width: 9px; height: 16px; flex: none; }
.ico { width: 16px; height: 16px; margin-right: 3px; flex: none; }
.tree b, .tree span { padding: 0 1px; white-space: nowrap; }
.sel { background: #eee; }

.details { height: 176px; background: #fff; border-bottom: 1px solid #ccc; flex: none; }
table { width: calc(100% - 2px); margin: 1px 0 0 1px; border-collapse: collapse; table-layout: fixed; }
.c-fold { width: 13px; }
.c-key { width: 93px; }
td, th { height: 18px; padding: 0 3px; border: 1px solid #a5a5a5; text-align: left; line-height: 17px; white-space: nowrap; }
.fold { padding: 0 1px; border: 0; border-right: 1px solid #a5a5a5; background: #fff; }
.fbox { display: block; width: 9px; height: 9px; border: 1px solid #888; background: linear-gradient(#222, #222) center / 5px 1px no-repeat; }
.on { background: #3296ff; color: #fff; }
.param { display: flex; align-items: center; gap: 5px; }
.param input { appearance: none; width: 11px; height: 11px; margin: 0; background: #fff; border: 1px solid #ccd; }
.edit { position: relative; display: flex; height: 17px; margin-right: -3px; }
.edit input { flex: 1; min-width: 0; border: 0; padding: 0; background: none; outline: 0; }
.edit button { width: 16px; background: #e5e5e5; border: 1px solid; border-color: #fff #888 #888 #fff; display: flex; align-items: center; justify-content: center; }
.edit button svg { width: 4px; height: 6px; }
.ibeam { position: absolute; left: 26px; top: 1px; width: 9px; height: 18px; }
.warn td:not(.fold) { background: #fe0; }

.selection { flex: 0 0 114px; }
.selbar { display: flex; align-items: center; height: 27px; padding-left: 14px; background: linear-gradient(#aaa, #aaa) 4px 5px / 1px 16px no-repeat, #f2f2f2; overflow: hidden; white-space: nowrap; flex: none; }
.selbar > * { flex: none; }
.selbar .combo { width: 152px; margin-left: 4px; margin-right: 6px; }
.show { padding: 0 2px; margin-left: 5px; background: #fff; }
.nosel { height: 17px; padding-left: 4px; line-height: 15px; background: #eee; border: 1px solid #888; flex: none; }
.gray { flex: 1; background: #a0a0a0; border: 1px solid #777; border-top: 0; }

.scene {
  position: relative;
  flex: 1;
  min-height: 0;
  padding: 16px;
  border-left: 1px solid #666;
  border-top: 1px solid #666;
  background: linear-gradient(#6b8ce0 0%, #a9baee 42%, #e0e6fa 76%, #fdfdff 100%);
  color: #0a1030;
}
.legend h2 { font-weight: bold; }
.entry { display: flex; gap: 5px; margin-top: 16px; }
.swatch { width: 17px; height: 17px; background: #ff3; border: 1px solid #222; }
.model { position: absolute; right: 2px; bottom: 11px; width: 290px; height: 260px; }
.scale { font: 33px "Open Sans", sans-serif; }

.viewtabs { position: relative; display: flex; gap: 14px; height: 18px; padding-left: 11px; background: #eee; border-top: 1px solid #111; border-bottom: 1px solid #111; flex: none; }
.slants { position: absolute; left: 1px; top: 0; width: 260px; height: 17px; }
.current { font-weight: bold; }
.graph { flex: none; margin-top: 6px; }
.plotbox { height: 127px; padding: 2px 27px 0 63px; background: #fff; border-left: 1px solid #888; border-bottom: 1px solid #ccc; }
.plot { display: block; width: 100%; height: 124px; overflow: visible; font: 11px "Open Sans", sans-serif; }
.graph .phead { padding-right: 6px; }
.bottomtabs { position: relative; display: flex; gap: 12px; height: 24px; padding: 2px 0 0 25px; }
.bottomtabs svg { position: absolute; left: 0; top: 0; width: 130px; height: 21px; }
.bottomtabs button { position: relative; height: 18px; }

.status { display: flex; gap: 3px; height: 20px; flex: none; background: #f6f7f9; padding-top: 2px; }
.status span { display: flex; align-items: center; padding-left: 2px; border: 1px solid #aaa; border-bottom: 0; background: #eee; white-space: nowrap; overflow: hidden; }
.status svg { width: 16px; height: 16px; margin-right: 3px; flex: none; }
.s1 { flex: 342 0 0; }
.s2 { flex: 162 0 0; }
.s3 { flex: 136 0 0; }
.s4 { flex: 303 0 0; }
.s5 { flex: 62 0 0; }
.edge { height: 2px; background: #54718d; flex: none; }
```
